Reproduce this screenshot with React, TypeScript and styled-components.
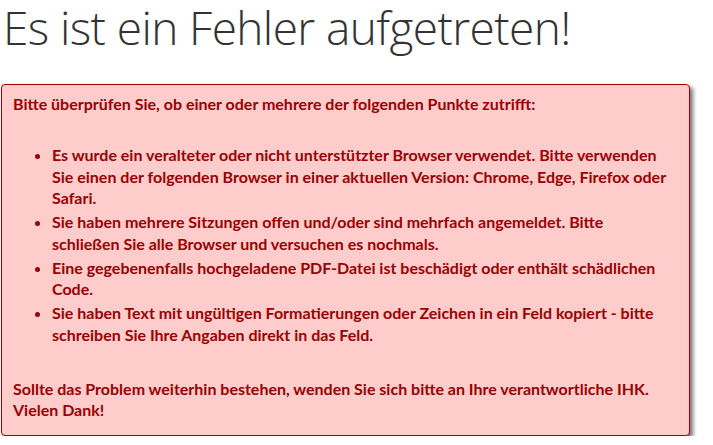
import styled, { createGlobalStyle } from "styled-components";

const GlobalStyle = createGlobalStyle`
	html, body {
		margin: 0;
		padding: 0;
		background: #fff;
	}
`;

const Page = styled.div`
	padding: 0 23px 0 1px;
	display: flex;
	flex-direction: column;
`;

const Title = styled.h1`
	margin: 0 0 29px 2px;
	font-family: "Open Sans", "Liberation Sans", sans-serif;
	font-weight: 300;
	font-size: 46px;
	letter-spacing: -0.6px;
	line-height: 55px;
	color: #333;
`;

const ErrorBox = styled.div`
	background: #ffcccc;
	border: 1px solid #a00;
	border-radius: 4px;
	box-shadow: 3px 3px 4px rgba(0, 0, 0, 0.55);
	padding: 8px 19px 14px 11px;
	color: #990000;
	font-family: Lato, "DejaVu Sans Condensed", sans-serif;
	font-weight: 700;
	font-size: 16px;
	line-height: 21.5px;
`;

const Para = styled.p`
	margin: 0;
`;

const List = styled.ul`
	margin: 29.5px 0 32.5px 0;
	padding-left: 39px;
`;

const Item = styled.li`
	margin-bottom: 2.5px;
`;

const items = [
	"Es wurde ein veralteter oder nicht unterstützter Browser verwendet. Bitte verwenden Sie einen der folgenden Browser in einer aktuellen Version: Chrome, Edge, Firefox oder Safari.",
	"Sie haben mehrere Sitzungen offen und/oder sind mehrfach angemeldet. Bitte schließen Sie alle Browser und versuchen es nochmals.",
	"Eine gegebenenfalls hochgeladene PDF-Datei ist beschädigt oder enthält schädlichen Code.",
	"Sie haben Text mit ungültigen Formatierungen oder Zeichen in ein Feld kopiert - bitte schreiben Sie Ihre Angaben direkt in das Feld.",
];

export default function App() {
	return (
		<Page>
			<GlobalStyle />
			<Title>Es ist ein Fehler aufgetreten!</Title>
			<ErrorBox>
				<Para>Bitte überprüfen Sie, ob einer oder mehrere der folgenden Punkte zutrifft:</Para>
				<List>
					{items.map((text) => (
						<Item key={text}>{text}</Item>
					))}
				</List>
				<Para>
					Sollte das Problem weiterhin bestehen, wenden Sie sich bitte an Ihre verantwortliche IHK.
					<br />
					Vielen Dank!
				</Para>
			</ErrorBox>
		</Page>
	);
}
